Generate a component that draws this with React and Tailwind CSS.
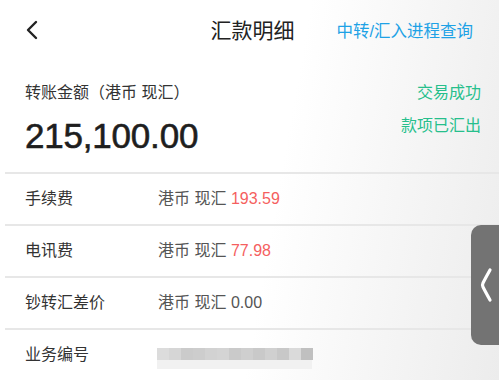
import React from 'react';

const FONT = { fontFamily: '"Liberation Sans", "Noto Sans CJK SC", sans-serif' };

const rows = [
  { label: '手续费', unit: '港币 现汇', amount: '193.59', red: true },
  { label: '电讯费', unit: '港币 现汇', amount: '77.98', red: true },
  { label: '钞转汇差价', unit: '港币 现汇', amount: '0.00', red: false },
];

// pixelated blur over the reference number
const BLUR = ['#dcdcdc', '#d6d6d6', '#cbcbcb', '#cdcdcd', '#d2d2d2', '#d4d4d4', '#cacaca', '#cfcfcf', '#c9c9c9', '#d0d0d0', '#c8c8c8', '#dadada', '#c0c0c0'];

function Divider() {
  return <div className="ml-[5px] h-[2px] bg-[#e7e7e7]" />;
}

export default function App() {
  return (
    <div
      className="relative w-[499px] h-[380px] overflow-hidden bg-[linear-gradient(100deg,#ffffff_55%,#ececec_100%)] text-[#222]"
      style={FONT}
    >
      {/* Header */}
      <div className="relative flex items-center h-[62px] pl-[24px] pr-[26px]">
        <svg width="14" height="20" viewBox="0 0 14 20" className="ml-[1px] mb-[2px]">
          <polyline points="11,2 3,10 11,18" fill="none" stroke="#222" strokeWidth="2.4" strokeLinecap="round" strokeLinejoin="round" />
        </svg>
        <div className="absolute left-0 right-0 text-center text-[21px] leading-[28px] pointer-events-none pl-[6px]">汇款明细</div>
        <div className="ml-auto text-[16.5px] leading-[22px] text-[#1ea2e6]">中转/汇入进程查询</div>
      </div>

      {/* Summary */}
      <div className="flex justify-between pl-[25px] pr-[18px] pt-[20px] pb-[16px]">
        <div className="flex flex-col">
          <div className="text-[16px] leading-[22px] text-[#333]">转账金额（港币 现汇）</div>
          <div className="mt-[12px] text-[35px] leading-[40px] text-[#1e1e1e] tracking-[-0.2px] [-webkit-text-stroke:0.6px_#1e1e1e]">215,100.00</div>
        </div>
        <div className="flex flex-col items-end text-[16px] leading-[22px] text-[#26bf8c]">
          <div>交易成功</div>
          <div className="mt-[11px]">款项已汇出</div>
        </div>
      </div>
      <Divider />

      {/* Detail rows */}
      {rows.map((r) => (
        <React.Fragment key={r.label}>
          <div className="flex items-center h-[50px] pl-[25px] text-[16px]">
            <div className="w-[133px] text-[#333]">{r.label}</div>
            <div className="text-[#555]">
              {r.unit} <span className={r.red ? 'text-[#f55f5f]' : 'text-[#555]'}>{r.amount}</span>
            </div>
          </div>
          <Divider />
        </React.Fragment>
      ))}
      <div className="flex items-center h-[50px] pl-[25px] text-[16px]">
        <div className="w-[132px] text-[#333]">业务编号</div>
        <div className="flex flex-col mt-[6px]">
          <div className="flex h-[12px]">
            {BLUR.map((c, i) => (
              <div key={i} className="w-[12px] h-full" style={{ backgroundColor: c }} />
            ))}
          </div>
          <div className="h-[9px] w-[155px] bg-[#f1f1f1]" />
        </div>
      </div>

      {/* Side pull tab */}
      <div className="absolute right-0 top-[225px] w-[28px] h-[120px] rounded-l-[10px] bg-[#737373] flex items-center pl-[8px]">
        <svg width="14" height="36" viewBox="0 0 14 36">
          <path d="M11 3 Q6 12 4 16 Q3 18 4 20 Q6 24 11 33" fill="none" stroke="#fff" strokeWidth="3.2" strokeLinecap="round" strokeLinejoin="round" />
        </svg>
      </div>
    </div>
  );
}
